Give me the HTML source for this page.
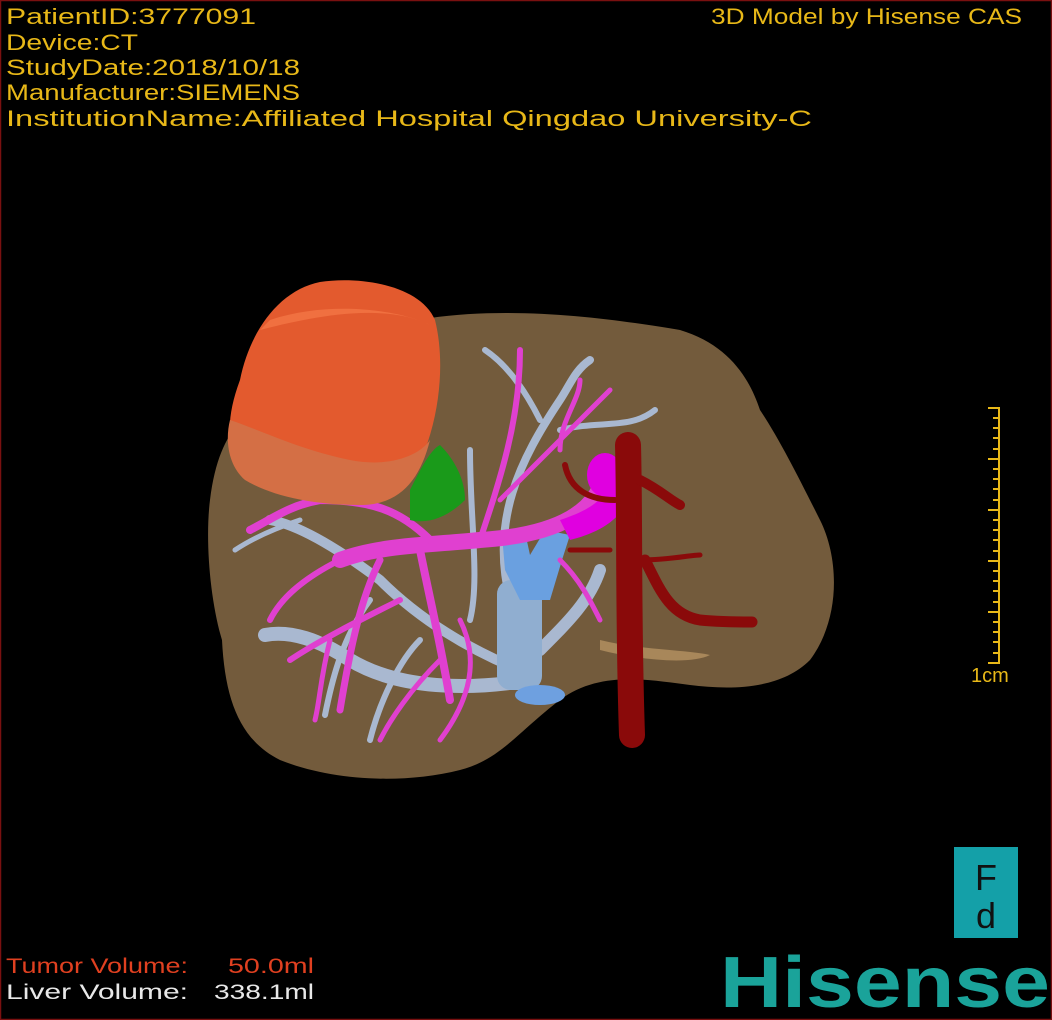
<!DOCTYPE html>
<html><head><style>
html,body{margin:0;padding:0;background:#000;}
svg{display:block;}
text{font-family:"Liberation Sans",sans-serif;}
</style></head><body>
<svg width="1052" height="1020" viewBox="0 0 1052 1020" xmlns="http://www.w3.org/2000/svg">
<rect x="0" y="0" width="1052" height="1020" fill="#000"/>
<rect x="0.5" y="0.5" width="1051" height="1019" fill="none" stroke="#7a1010" stroke-width="1.5"/>

<!-- liver -->
<path d="M240 420 C260 360 330 330 430 318 C520 305 620 320 680 330 C730 345 750 380 760 410 C780 440 800 480 820 520 C840 560 840 620 810 660 C780 690 730 690 690 685 C650 680 600 670 560 700 C520 730 500 760 460 770 C400 785 330 780 280 760 C240 740 225 700 222 640 C210 600 205 540 210 500 C215 460 225 440 240 420 Z" fill="#735b3c"/>
<path d="M600 640 C640 650 690 650 710 655 C690 665 640 660 600 650Z" fill="#a8875a"/>

<!-- light blue (portal) vessels -->
<g stroke="#a9b8d0" stroke-linecap="round" fill="none">
<path d="M530 680 C470 690 400 690 350 660 C320 640 290 630 265 635" stroke-width="14"/>
<path d="M520 670 C470 650 420 620 380 580 C340 550 300 525 270 520" stroke-width="10"/>
<path d="M510 600 C490 520 520 460 560 400 C570 385 575 370 590 360" stroke-width="8"/>
<path d="M540 420 C520 380 500 360 485 350" stroke-width="6"/>
<path d="M560 430 C600 420 630 430 655 410" stroke-width="6"/>
<path d="M370 600 C340 640 330 690 325 715" stroke-width="6"/>
<path d="M420 640 C400 660 380 700 370 740" stroke-width="6"/>
<path d="M470 620 C480 580 470 520 470 450" stroke-width="6"/>
<path d="M300 520 C270 530 250 540 235 550" stroke-width="5"/>
<path d="M540 650 C570 620 590 600 600 570" stroke-width="12"/>
</g>
<rect x="497" y="580" width="45" height="110" rx="14" fill="#90aed0"/>
<ellipse cx="540" cy="695" rx="25" ry="10" fill="#6ea0e0"/>
<path d="M502 535 L525 532 L530 555 L545 530 L570 535 L562 560 L550 600 L520 600 L505 570Z" fill="#6aa0e0"/>

<!-- magenta vessels -->
<g stroke="#e040d0" stroke-linecap="round" fill="none">
<path d="M605 470 C600 510 560 535 480 540 C430 545 380 545 340 560" stroke-width="16"/>
<path d="M430 540 C400 510 370 500 320 500 C290 505 270 520 250 530" stroke-width="8"/>
<path d="M420 550 C430 600 440 640 450 700" stroke-width="8"/>
<path d="M380 560 C360 600 350 650 340 710" stroke-width="7"/>
<path d="M400 600 C360 620 320 640 290 660" stroke-width="6"/>
<path d="M440 660 C410 690 390 720 380 740" stroke-width="5"/>
<path d="M480 540 C500 480 520 420 520 350" stroke-width="6"/>
<path d="M500 500 C540 460 580 420 610 390" stroke-width="5"/>
<path d="M560 450 C560 420 580 400 580 380" stroke-width="5"/>
<path d="M460 620 C480 660 470 700 440 740" stroke-width="5"/>
<path d="M340 560 C300 580 280 600 270 620" stroke-width="6"/>
<path d="M330 640 C320 680 320 700 315 720" stroke-width="5"/>
<path d="M560 560 C580 580 590 600 600 620" stroke-width="5"/>
</g>
<ellipse cx="605" cy="475" rx="18" ry="22" fill="#e000e0"/>
<path d="M560 520 C590 510 605 500 610 480 L625 505 C615 525 590 535 570 540Z" fill="#e000e0"/>

<!-- green -->
<path d="M410 490 C420 470 430 450 440 445 C455 460 465 480 465 500 C450 515 430 525 410 520Z" fill="#1a9a1a"/>

<!-- tumor -->
<path d="M240 380 C250 330 280 290 320 282 C360 276 420 285 435 320 C445 360 440 410 425 450 C400 475 360 480 320 480 C290 490 270 480 250 470 C225 455 225 420 240 380 Z" fill="#e35a2e"/>
<path d="M230 420 C260 430 300 450 350 460 C390 468 420 455 430 440 C420 480 400 505 360 505 C310 505 270 495 245 480 C228 465 225 440 230 420Z" fill="#d46f45"/>
<path d="M260 330 C300 320 380 300 430 325 C400 310 330 300 270 320Z" fill="#f07040"/>

<!-- artery -->
<g stroke="#8a0a0a" stroke-linecap="round" fill="none">
<path d="M628 445 C630 520 628 620 632 735" stroke-width="26"/>
<path d="M640 480 C660 490 670 500 680 505" stroke-width="10"/>
<path d="M645 560 C660 590 670 615 700 620 C720 622 740 622 752 622" stroke-width="11"/>
<path d="M615 500 C590 500 570 490 565 465" stroke-width="6"/>
<path d="M640 560 C670 560 690 555 700 555" stroke-width="5"/>
<path d="M610 550 C590 550 580 550 570 550" stroke-width="5"/>
</g>

<!-- scale -->
<g stroke="#e8b818" stroke-width="2">
<line x1="999" y1="407" x2="999" y2="664"/>
<line x1="988" y1="408" x2="999" y2="408"/><line x1="988" y1="459" x2="999" y2="459"/>
<line x1="988" y1="510" x2="999" y2="510"/><line x1="988" y1="561" x2="999" y2="561"/>
<line x1="988" y1="612" x2="999" y2="612"/><line x1="988" y1="663" x2="999" y2="663"/>
<line x1="993" y1="418" x2="999" y2="418"/><line x1="993" y1="428" x2="999" y2="428"/><line x1="993" y1="438" x2="999" y2="438"/><line x1="993" y1="449" x2="999" y2="449"/>
<line x1="993" y1="469" x2="999" y2="469"/><line x1="993" y1="479" x2="999" y2="479"/><line x1="993" y1="489" x2="999" y2="489"/><line x1="993" y1="500" x2="999" y2="500"/>
<line x1="993" y1="520" x2="999" y2="520"/><line x1="993" y1="530" x2="999" y2="530"/><line x1="993" y1="540" x2="999" y2="540"/><line x1="993" y1="551" x2="999" y2="551"/>
<line x1="993" y1="571" x2="999" y2="571"/><line x1="993" y1="581" x2="999" y2="581"/><line x1="993" y1="591" x2="999" y2="591"/><line x1="993" y1="602" x2="999" y2="602"/>
<line x1="993" y1="622" x2="999" y2="622"/><line x1="993" y1="632" x2="999" y2="632"/><line x1="993" y1="642" x2="999" y2="642"/><line x1="993" y1="653" x2="999" y2="653"/>
</g>
<text x="971" y="682" font-size="20" fill="#e8b818">1cm</text>

<!-- info text -->
<g fill="#e8b818" font-size="22">
<text x="6" y="24" textLength="250" lengthAdjust="spacingAndGlyphs">PatientID:3777091</text>
<text x="6" y="50" textLength="132" lengthAdjust="spacingAndGlyphs">Device:CT</text>
<text x="6" y="75" textLength="294" lengthAdjust="spacingAndGlyphs">StudyDate:2018/10/18</text>
<text x="6" y="100" textLength="294" lengthAdjust="spacingAndGlyphs">Manufacturer:SIEMENS</text>
<text x="6" y="126" textLength="806" lengthAdjust="spacingAndGlyphs">InstitutionName:Affiliated Hospital Qingdao University-C</text>
<text x="711" y="24" textLength="311" lengthAdjust="spacingAndGlyphs">3D Model by Hisense CAS</text>
</g>
<g font-size="21">
<text x="6" y="973" fill="#e04020" textLength="182" lengthAdjust="spacingAndGlyphs">Tumor Volume:</text>
<text x="228" y="973" fill="#e04020" textLength="86" lengthAdjust="spacingAndGlyphs">50.0ml</text>
<text x="6" y="999" fill="#e8e8e8" textLength="182" lengthAdjust="spacingAndGlyphs">Liver Volume:</text>
<text x="214" y="999" fill="#e8e8e8" textLength="100" lengthAdjust="spacingAndGlyphs">338.1ml</text>
</g>

<!-- orientation cube -->
<rect x="954" y="847" width="64" height="91" fill="#14a0a8"/>
<text x="986" y="890" font-size="36" fill="#111" text-anchor="middle">F</text>
<text x="986" y="928" font-size="36" fill="#111" text-anchor="middle">d</text>

<!-- Hisense logo -->
<text x="720" y="1007" font-size="72" font-weight="bold" fill="#1aa39a" textLength="330" lengthAdjust="spacingAndGlyphs">Hisense</text>
</svg>
</body></html>
